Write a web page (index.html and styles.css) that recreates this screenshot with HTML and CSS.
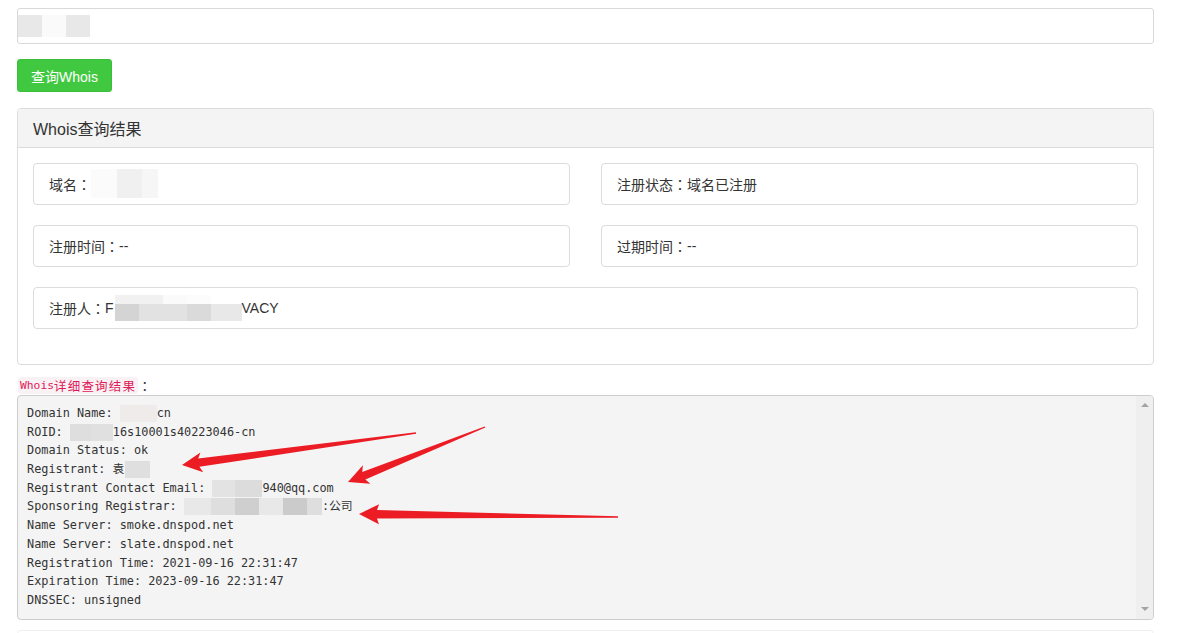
FILE: index.html
```html
<!DOCTYPE html>
<html lang="zh-CN">
<head>
<meta charset="utf-8">
<title>Whois查询</title>
<link rel="stylesheet" href="styles.css">
</head>
<body>
<div class="page">
  <div class="input">
    <span class="mz m1"></span><span class="mz m2"></span><span class="mz m1"></span>
  </div>
  <button class="btn">查询Whois</button>

  <div class="panel">
    <div class="panel-head">Whois查询结果</div>
    <div class="panel-body">
      <div class="field">域名<span class="colon">：</span><span class="mz d1"></span><span class="mz d2"></span><span class="mz d3"></span></div>
      <div class="field">注册状态<span class="colon">：</span>域名已注册</div>
      <div class="field">注册时间<span class="colon">：</span>--</div>
      <div class="field">过期时间<span class="colon">：</span>--</div>
      <div class="field wide">注册人<span class="colon">：</span>F<span class="mosaic"><span class="r a"></span><span class="r b"></span><span class="r c"></span><span class="r d"></span><span class="r e"></span></span>VACY</div>
    </div>
  </div>

  <div class="label"><code><span class="en">Whois</span><span class="zh">详细查询结果</span></code><span class="colon">：</span></div>

  <div class="pre">
    <div class="pre-text"><div>Domain Name: <span class="bl b-name"></span>cn</div><div>ROID: <span class="bl b-roid"></span>16s10001s40223046-cn</div><div>Domain Status: ok</div><div>Registrant: 袁<span class="bl b-reg"></span></div><div>Registrant Contact Email: <span class="bl b-mail"><i class="g1"></i><i class="g2"></i></span>940@qq.com</div><div>Sponsoring Registrar: <span class="bl b-spon"><i class="s1"></i><i class="s2"></i><i class="s3"></i><i class="s4"></i><i class="s5"></i><i class="s6"></i></span>:公司</div><div>Name Server: smoke.dnspod.net</div><div>Name Server: slate.dnspod.net</div><div>Registration Time: 2021-09-16 22:31:47</div><div>Expiration Time: 2023-09-16 22:31:47</div><div>DNSSEC: unsigned</div></div>
    <div class="scrollbar"><span class="up"></span><span class="down"></span></div>
  </div>

  <div class="next"></div>
</div>

<svg class="arrows" width="1177" height="633" viewBox="0 0 1177 633" xmlns="http://www.w3.org/2000/svg">
  <polygon fill="#ec1c24" points="182,465 200.4,452.4 198.2,458.6 415.9,432.3 416.1,433.7 199.4,466.8 203.2,472.2"/>
  <polygon fill="#ec1c24" points="348,482 362.9,465.2 362.2,472 484.7,426.4 485.3,427.6 365.4,479.5 370.3,483.8"/>
  <polygon fill="#ec1c24" points="359,514 379.1,504.2 377,510 618,516.3 618,517.7 377,518.6 378.9,524.2"/>
</svg>
</body>
</html>
```
FILE: styles.css
```css
* { box-sizing: border-box; }
html, body { margin: 0; padding: 0; background: #fff; }
body {
  font-family: "Liberation Sans", "Noto Sans CJK SC", sans-serif;
  font-size: 14px;
  color: #333;
  position: relative;
  width: 1177px;
  height: 633px;
  overflow: hidden;
}
.page {
  padding: 8px 23px 0 17px;
  display: flex;
  flex-direction: column;
  align-items: flex-start;
}
.input {
  width: 100%;
  height: 36px;
  border: 1px solid #d9d9d9;
  border-radius: 3px;
  display: flex;
  align-items: center;
  padding: 0;
}
.mz { display: inline-block; }
.input .mz { width: 24px; height: 22px; }
.input .m1 { background: #e8e8e8; }
.input .m2 { background: #fafafa; }

.colon { font-family: "Noto Sans CJK TC", sans-serif; }

.btn {
  margin-top: 15px;
  height: 33px;
  padding: 0 12px;
  border: 1px solid #3bbf3b;
  border-radius: 3px;
  background: #40c940;
  color: #fff;
  font-family: "Liberation Sans", "Noto Sans CJK SC", sans-serif;
  font-size: 14px;
  width: 95px;
}

.panel {
  margin-top: 16px;
  width: 100%;
  border: 1px solid #dcdcdc;
  border-radius: 4px;
}
.panel-head {
  height: 39px;
  background: #f4f4f4;
  border-bottom: 1px solid #dcdcdc;
  border-radius: 3px 3px 0 0;
  padding: 0 15px 1px;
  display: flex;
  align-items: center;
  font-size: 16px;
  color: #333;
}
.panel-body {
  padding: 15px 15px 35px;
  display: grid;
  grid-template-columns: 1fr 1fr;
  gap: 20px 31px;
}
.field {
  height: 42px;
  border: 1px solid #dcdcdc;
  border-radius: 4px;
  padding: 0 15px 1px;
  display: flex;
  align-items: center;
  font-size: 14px;
  color: #333;
}
.field.wide { grid-column: 1 / span 2; }
.field .mz { height: 29px; }
.d1 { width: 26px; background: #fbfbfb; }
.d2 { width: 25px; background: #f0f0f0; }
.d3 { width: 16px; background: #f6f6f6; }
.mosaic {
  display: inline-flex;
  height: 26px;
  margin-left: 1px;
}
.mosaic .r { display: block; width: 24px; height: 26px; }
.mosaic .a { background: linear-gradient(#f1f1f1 35%, #d4d4d4 35%); }
.mosaic .b { background: linear-gradient(#f1f1f1 35%, #e2e2e2 35%); }
.mosaic .c { background: linear-gradient(#fafafa 35%, #e2e2e2 35%); }
.mosaic .d { background: linear-gradient(#fcfcfc 35%, #dadada 35%); }
.mosaic .e { background: linear-gradient(#ffffff 35%, #e8e8e8 35%); width: 31px; }

.label {
  margin-top: 12px;
  margin-left: 1px;
  height: 17px;
  display: flex;
  align-items: center;
  font-size: 13px;
  color: #333;
}
.label code {
  background: #f9f2f4;
  color: #e0185a;
  border-radius: 3px;
  padding: 0 2px;
  height: 17px;
  display: flex;
  align-items: center;
}
.label .en { font-family: "DejaVu Sans Mono", monospace; font-size: 11.3px; }
.label .zh {
  font-family: "Noto Sans CJK SC", sans-serif;
  font-size: 12.5px;
  letter-spacing: 1.2px;
}

.pre {
  margin-top: 1px;
  width: 100%;
  height: 225px;
  background: #f4f4f4;
  border: 1px solid #cdcdcd;
  border-radius: 4px;
  display: flex;
}
.pre-text {
  flex: 1;
  padding: 8px 9px;
  font-family: "DejaVu Sans Mono", "Noto Sans CJK SC", monospace;
  font-size: 11.85px;
  line-height: 18.7px;
  color: #333;
  white-space: pre;
}
.pre-text > div { height: 18.7px; display: flex; align-items: center; }
.bl { display: inline-flex; height: 17px; }
.bl i { display: block; height: 17px; }
.b-name { width: 37px; background: #efebeb; }
.b-roid { width: 43px; background: linear-gradient(90deg, #dedede 50%, #e0e0e0 50%); }
.b-reg { width: 25px; background: #dfdfdf; margin-left: 1px; }
.b-mail { width: 50px; }
.b-mail .g1 { width: 23px; background: #e3e3e3; }
.b-mail .g2 { width: 27px; background: #dcdcdc; }
.b-spon { width: 138px; }
.b-spon .s1 { width: 27px; background: #e8e8e8; }
.b-spon .s2 { width: 24px; background: #dedede; }
.b-spon .s3 { width: 24px; background: #cfcfcf; }
.b-spon .s4 { width: 24px; background: #e8e8e8; }
.b-spon .s5 { width: 24px; background: #cbcbcb; }
.b-spon .s6 { width: 15px; background: #dedede; }

.scrollbar {
  width: 17px;
  background: #efefef;
  display: flex;
  flex-direction: column;
  justify-content: space-between;
  align-items: center;
  padding: 7px 0 8px;
  border-radius: 0 3px 3px 0;
}
.scrollbar .up {
  width: 0; height: 0;
  border-left: 4px solid transparent;
  border-right: 4px solid transparent;
  border-bottom: 4px solid #a3a3a3;
}
.scrollbar .down {
  width: 0; height: 0;
  border-left: 4px solid transparent;
  border-right: 4px solid transparent;
  border-top: 4px solid #a3a3a3;
}

.next {
  margin-top: 10px;
  width: 100%;
  height: 20px;
  border: 1px solid #eeeeee;
  border-radius: 4px;
}

.arrows {
  position: absolute;
  top: 0;
  left: 0;
  pointer-events: none;
}
```
